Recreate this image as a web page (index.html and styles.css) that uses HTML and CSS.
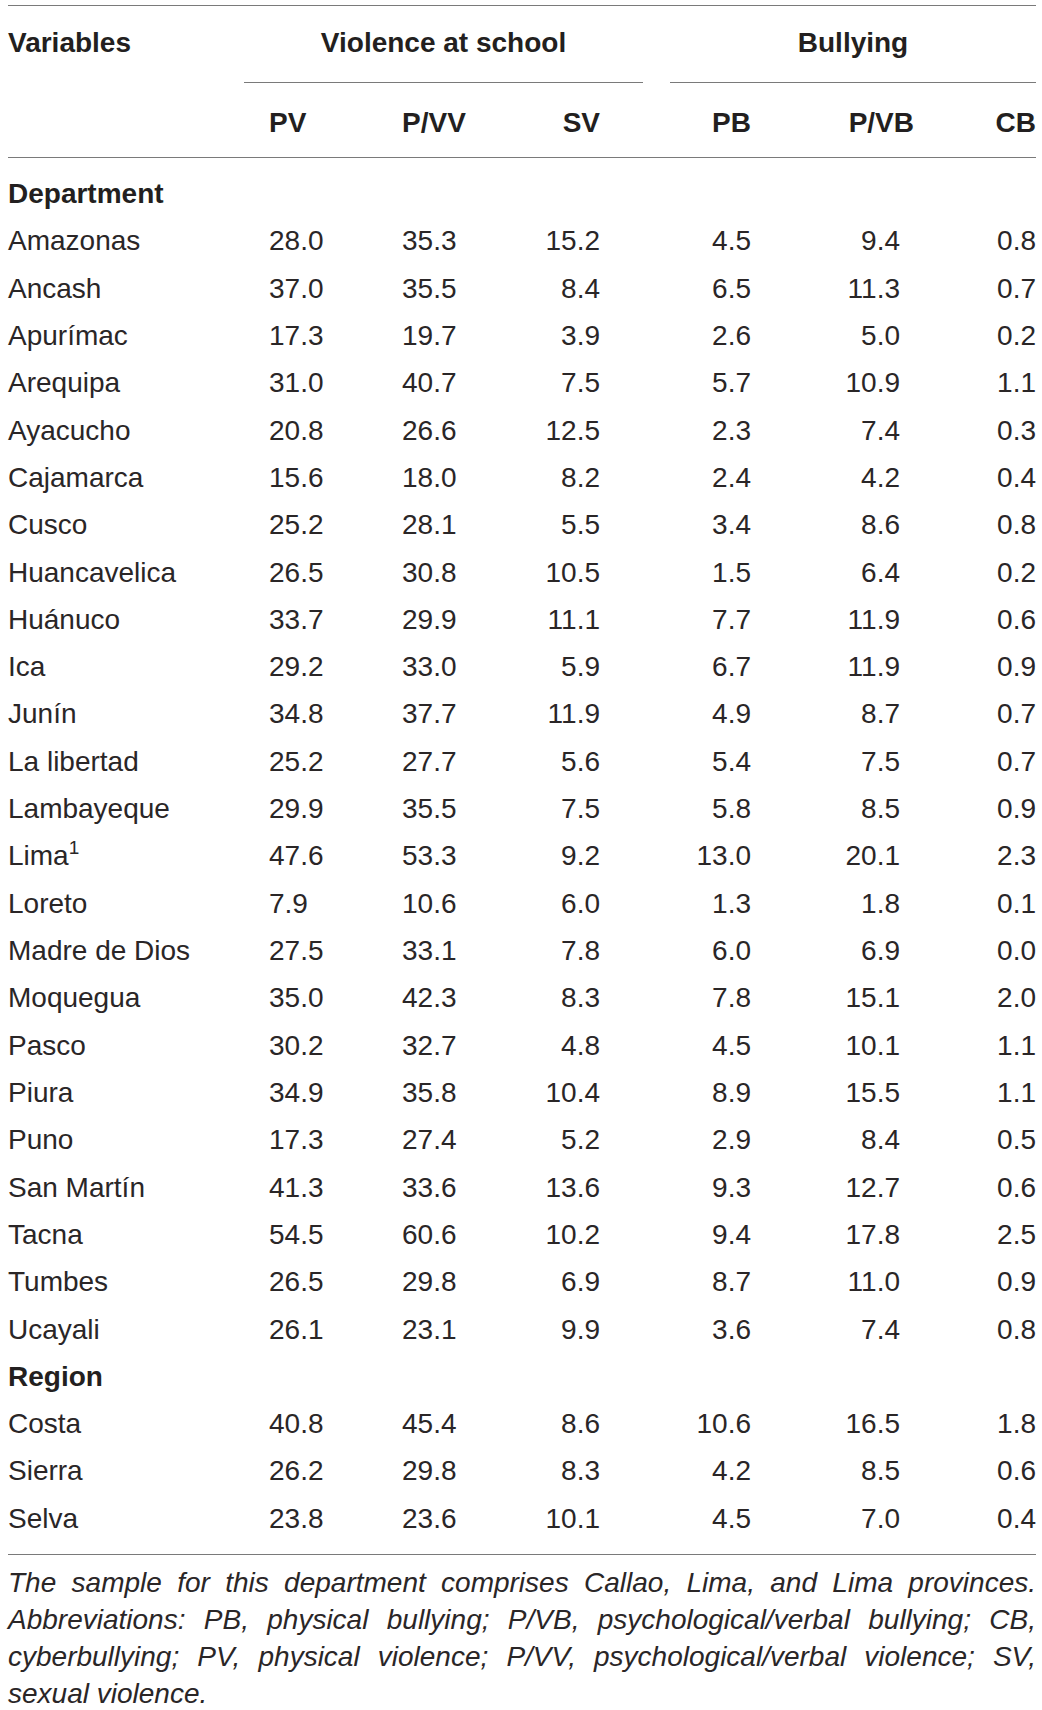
FILE: index.html
```html
<!doctype html>
<html lang="en-US">
  <head>
    <title>Violence at school and bullying by department</title>
    <link rel="stylesheet" href="styles.css">
  </head>
  <body>
    <div class="page">
      <table class="dataTable">
        <colgroup>
          <col class="colVar">
          <col class="colV">
          <col class="colV">
          <col class="colV">
          <col class="colGap">
          <col class="colB">
          <col class="colB">
          <col class="colB">
        </colgroup>
        <thead>
          <tr class="groupRow">
            <th class="varHead" rowspan="2">Variables</th>
            <th class="groupHead" colspan="3">Violence at school</th>
            <th class="gap"></th>
            <th class="groupHead" colspan="3">Bullying</th>
          </tr>
          <tr class="subRow">
            <th class="pv">PV</th>
            <th class="pvv">P/VV</th>
            <th class="sv">SV</th>
            <th class="gap"></th>
            <th class="pb">PB</th>
            <th class="pvbHead">P/VB</th>
            <th class="cb">CB</th>
          </tr>
        </thead>
        <tbody id="rows"></tbody>
      </table>
      <p class="noteLead">The sample for this department comprises Callao, Lima, and Lima provinces.</p>
      <p class="note">Abbreviations: PB, physical bullying; P/VB, psychological/verbal bullying; CB, cyberbullying; PV, physical violence; P/VV, psychological/verbal violence; SV, sexual violence.</p>
    </div>
    <script>
      var groups = [
        {
          title: 'Department',
          rows: [
            ['Amazonas', '28.0', '35.3', '15.2', '4.5', '9.4', '0.8'],
            ['Ancash', '37.0', '35.5', '8.4', '6.5', '11.3', '0.7'],
            ['Apurímac', '17.3', '19.7', '3.9', '2.6', '5.0', '0.2'],
            ['Arequipa', '31.0', '40.7', '7.5', '5.7', '10.9', '1.1'],
            ['Ayacucho', '20.8', '26.6', '12.5', '2.3', '7.4', '0.3'],
            ['Cajamarca', '15.6', '18.0', '8.2', '2.4', '4.2', '0.4'],
            ['Cusco', '25.2', '28.1', '5.5', '3.4', '8.6', '0.8'],
            ['Huancavelica', '26.5', '30.8', '10.5', '1.5', '6.4', '0.2'],
            ['Huánuco', '33.7', '29.9', '11.1', '7.7', '11.9', '0.6'],
            ['Ica', '29.2', '33.0', '5.9', '6.7', '11.9', '0.9'],
            ['Junín', '34.8', '37.7', '11.9', '4.9', '8.7', '0.7'],
            ['La libertad', '25.2', '27.7', '5.6', '5.4', '7.5', '0.7'],
            ['Lambayeque', '29.9', '35.5', '7.5', '5.8', '8.5', '0.9'],
            ['Lima<sup>1</sup>', '47.6', '53.3', '9.2', '13.0', '20.1', '2.3'],
            ['Loreto', '7.9', '10.6', '6.0', '1.3', '1.8', '0.1'],
            ['Madre de Dios', '27.5', '33.1', '7.8', '6.0', '6.9', '0.0'],
            ['Moquegua', '35.0', '42.3', '8.3', '7.8', '15.1', '2.0'],
            ['Pasco', '30.2', '32.7', '4.8', '4.5', '10.1', '1.1'],
            ['Piura', '34.9', '35.8', '10.4', '8.9', '15.5', '1.1'],
            ['Puno', '17.3', '27.4', '5.2', '2.9', '8.4', '0.5'],
            ['San Martín', '41.3', '33.6', '13.6', '9.3', '12.7', '0.6'],
            ['Tacna', '54.5', '60.6', '10.2', '9.4', '17.8', '2.5'],
            ['Tumbes', '26.5', '29.8', '6.9', '8.7', '11.0', '0.9'],
            ['Ucayali', '26.1', '23.1', '9.9', '3.6', '7.4', '0.8'],
          ],
        },
        {
          title: 'Region',
          rows: [
            ['Costa', '40.8', '45.4', '8.6', '10.6', '16.5', '1.8'],
            ['Sierra', '26.2', '29.8', '8.3', '4.2', '8.5', '0.6'],
            ['Selva', '23.8', '23.6', '10.1', '4.5', '7.0', '0.4'],
          ],
        },
      ]
      var cellClasses = ['name', 'pv', 'pvv', 'sv', 'gap', 'pb', 'pvb', 'cb']
      var tbody = document.getElementById('rows')
      groups.forEach(function (group) {
        var head = document.createElement('tr')
        head.innerHTML = '<td class="section" colspan="8">' + group.title + '</td>'
        tbody.appendChild(head)
        group.rows.forEach(function (row) {
          var values = row.slice(0, 4).concat([''], row.slice(4))
          var tr = document.createElement('tr')
          tr.innerHTML = values
            .map(function (value, i) {
              return '<td class="' + cellClasses[i] + '">' + value + '</td>'
            })
            .join('')
          tbody.appendChild(tr)
        })
      })
    </script>
  </body>
</html>
```

FILE: styles.css
```css
body {
  margin: 0;
  background-color: #ffffff;
  color: #2a2627;
  font-family: "Liberation Sans", Arial, sans-serif;
}

.page {
  width: 1028px;
  padding: 5px 0 0 8px;
}

.dataTable {
  width: 1028px;
  table-layout: fixed;
  border-collapse: separate;
  border-spacing: 0;
  border-top: 1px solid #7a7a7a;
  border-bottom: 1px solid #7a7a7a;
  font-size: 28px;
}

.colVar { width: 236px; }
.colV { width: 133px; }
.colGap { width: 27px; }
.colB { width: 122px; }

th {
  color: #231f20;
  font-weight: 700;
  line-height: 32px;
  padding: 0;
  white-space: nowrap;
}

.groupRow th {
  padding-top: 21px;
  padding-bottom: 23px;
}

.groupHead {
  text-align: center;
  border-bottom: 1px solid #7a7a7a;
}

.varHead {
  text-align: left;
  vertical-align: top;
  border-bottom: 1px solid #7a7a7a;
}

.subRow th {
  padding-top: 24px;
  padding-bottom: 18px;
  border-bottom: 1px solid #7a7a7a;
}

td {
  padding: 0;
  line-height: 47.32px;
  white-space: nowrap;
}

tbody tr:first-child td {
  padding-top: 12px;
}

tbody tr:last-child td {
  padding-bottom: 12px;
}

.section {
  color: #231f20;
  font-weight: 700;
}

.name sup {
  font-size: 19px;
  line-height: 0;
  vertical-align: 11px;
}

.pv,
.pvv {
  text-align: left;
  padding-left: 25px;
}

.sv {
  text-align: right;
  padding-right: 43px;
}

.pb {
  text-align: right;
  padding-right: 41px;
}

.pvb {
  text-align: right;
  padding-right: 14px;
}

.pvbHead,
.cb {
  text-align: right;
}

.noteLead,
.note {
  margin: 0;
  font-size: 28px;
  font-style: italic;
  line-height: 37px;
  text-align: justify;
}

.noteLead {
  padding-top: 9px;
  text-align-last: justify;
}
```
